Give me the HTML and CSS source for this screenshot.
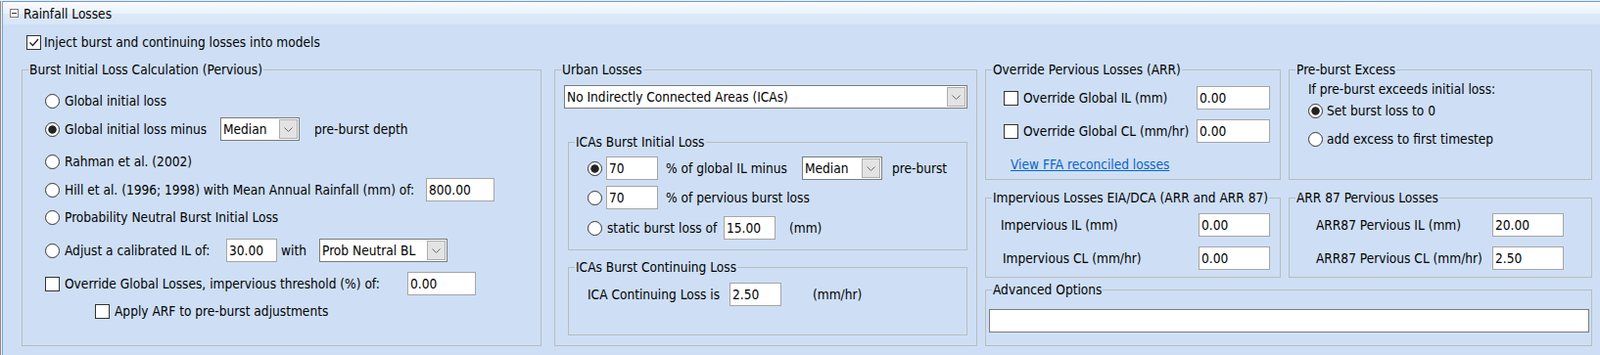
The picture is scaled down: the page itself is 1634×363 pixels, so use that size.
FILE: index.html
```html
<!DOCTYPE html>
<html lang="en">
<head>
  <meta charset="UTF-8">
  <title>Rainfall Losses</title>
  <link rel="stylesheet" href="styles.css">
</head>
<body>
  <div class="window">
    <div class="panel">
      <div class="panel-head">
        <span class="collapse"></span>
        <span>Rainfall Losses</span>
      </div>
      <div class="panel-body">
        <div class="inject">
          <span class="check is-on"><svg width="13" height="13" viewBox="0 0 13 13"><polyline points="2.5,6.5 5.5,9.5 11,3" fill="none" stroke="#222" stroke-width="1.3"/></svg></span>
          <span class="opt-text">Inject burst and continuing losses into models</span>
        </div>

        <div class="layout">
          <!-- pervious burst loss -->
          <fieldset class="group group-burst">
            <legend>Burst Initial Loss Calculation (Pervious)</legend>
            <div class="burst-opts">
              <div class="row">
                <span class="radio"></span><span class="opt-text">Global initial loss</span>
              </div>
              <div class="row">
                <span class="radio is-on"></span><span class="opt-text lbl-minus">Global initial loss minus</span>
                <div class="combo combo-median">
                  <span class="combo-text">Median</span>
                  <span class="combo-btn"><svg width="9" height="5" viewBox="0 0 9 5"><polyline points="0.5,0.5 4.5,4.5 8.5,0.5" fill="none" stroke="#6a6a6a"/></svg></span>
                </div>
                <span class="after-median">pre-burst depth</span>
              </div>
              <div class="row">
                <span class="radio"></span><span class="opt-text">Rahman et al. (2002)</span>
              </div>
              <div class="row">
                <span class="radio"></span><span class="opt-text lbl-hill">Hill et al. (1996; 1998) with Mean Annual Rainfall (mm) of:</span>
                <input class="field field-70" type="text" value="800.00">
              </div>
              <div class="row">
                <span class="radio"></span><span class="opt-text">Probability Neutral Burst Initial Loss</span>
              </div>
              <div class="row">
                <span class="radio"></span><span class="opt-text lbl-adjust">Adjust a calibrated IL of:</span>
                <input class="field field-adjust" type="text" value="30.00">
                <span class="lbl-with">with</span>
                <div class="combo combo-prob">
                  <span class="combo-text">Prob Neutral BL</span>
                  <span class="combo-btn"><svg width="9" height="5" viewBox="0 0 9 5"><polyline points="0.5,0.5 4.5,4.5 8.5,0.5" fill="none" stroke="#6a6a6a"/></svg></span>
                </div>
              </div>
              <div class="row">
                <span class="check"></span><span class="opt-text lbl-threshold">Override Global Losses, impervious threshold (%) of:</span>
                <input class="field field-70" type="text" value="0.00">
              </div>
              <div class="row row-arf">
                <span class="check"></span><span class="opt-text">Apply ARF to pre-burst adjustments</span>
              </div>
            </div>
          </fieldset>

          <!-- urban -->
          <fieldset class="group group-urban">
            <legend>Urban Losses</legend>
            <div class="urban-body">
              <div class="combo combo-ica">
                <span class="combo-text">No Indirectly Connected Areas (ICAs)</span>
                <span class="combo-btn"><svg width="9" height="5" viewBox="0 0 9 5"><polyline points="0.5,0.5 4.5,4.5 8.5,0.5" fill="none" stroke="#6a6a6a"/></svg></span>
              </div>

              <fieldset class="group group-ica-il">
                <legend>ICAs Burst Initial Loss</legend>
                <div class="ica-opts">
                  <div class="row">
                    <span class="radio is-on"></span>
                    <input class="field field-pct" type="text" value="70">
                    <span class="lbl-pct lbl-global">% of global IL minus</span>
                    <div class="combo combo-ica-median">
                      <span class="combo-text">Median</span>
                      <span class="combo-btn"><svg width="9" height="5" viewBox="0 0 9 5"><polyline points="0.5,0.5 4.5,4.5 8.5,0.5" fill="none" stroke="#6a6a6a"/></svg></span>
                    </div>
                    <span class="after-ica-median">pre-burst</span>
                  </div>
                  <div class="row">
                    <span class="radio"></span>
                    <input class="field field-pct" type="text" value="70">
                    <span class="lbl-pct">% of pervious burst loss</span>
                  </div>
                  <div class="row">
                    <span class="radio"></span>
                    <span class="opt-text lbl-static">static burst loss of</span>
                    <input class="field field-53" type="text" value="15.00">
                    <span class="unit-mm">(mm)</span>
                  </div>
                </div>
              </fieldset>

              <fieldset class="group group-ica-cl">
                <legend>ICAs Burst Continuing Loss</legend>
                <div class="ica-cl-body">
                  <div class="row">
                    <span class="lbl-ica-cl">ICA Continuing Loss is</span>
                    <input class="field field-53" type="text" value="2.50">
                    <span class="unit-mmhr">(mm/hr)</span>
                  </div>
                </div>
              </fieldset>
            </div>
          </fieldset>

          <!-- right hand side -->
          <div class="col-right">
            <div class="right-top">
              <fieldset class="group group-override">
                <legend>Override Pervious Losses (ARR)</legend>
                <div class="override-body">
                  <div class="row">
                    <span class="check"></span><span class="opt-text lbl-override">Override Global IL (mm)</span>
                    <input class="field field-override" type="text" value="0.00">
                  </div>
                  <div class="row row-next">
                    <span class="check"></span><span class="opt-text lbl-override">Override Global CL (mm/hr)</span>
                    <input class="field field-override" type="text" value="0.00">
                  </div>
                  <a class="ffa-link" href="#">View FFA reconciled losses</a>
                </div>
              </fieldset>

              <fieldset class="group group-excess">
                <legend>Pre-burst Excess</legend>
                <div class="excess-body">
                  <div class="excess-note">If pre-burst exceeds initial loss:</div>
                  <div class="row row-set">
                    <span class="radio is-on"></span><span class="opt-text">Set burst loss to 0</span>
                  </div>
                  <div class="row row-add">
                    <span class="radio"></span><span class="opt-text">add excess to first timestep</span>
                  </div>
                </div>
              </fieldset>
            </div>

            <div class="right-mid">
              <fieldset class="group group-imperv">
                <legend>Impervious Losses EIA/DCA (ARR and ARR 87)</legend>
                <div class="imperv-body">
                  <div class="row">
                    <span class="lbl-imperv">Impervious IL (mm)</span>
                    <input class="field field-73" type="text" value="0.00">
                  </div>
                  <div class="row row-next">
                    <span class="lbl-imperv lbl-imperv-cl">Impervious CL (mm/hr)</span>
                    <input class="field field-73" type="text" value="0.00">
                  </div>
                </div>
              </fieldset>

              <fieldset class="group group-arr87">
                <legend>ARR 87 Pervious Losses</legend>
                <div class="arr87-body">
                  <div class="row">
                    <span class="lbl-arr87">ARR87 Pervious IL (mm)</span>
                    <input class="field field-73" type="text" value="20.00">
                  </div>
                  <div class="row row-next">
                    <span class="lbl-arr87">ARR87 Pervious CL (mm/hr)</span>
                    <input class="field field-73" type="text" value="2.50">
                  </div>
                </div>
              </fieldset>
            </div>

            <fieldset class="group group-advanced">
              <legend>Advanced Options</legend>
              <div class="advanced-body">
                <input class="field field-advanced" type="text" value="">
              </div>
            </fieldset>
          </div>
        </div>
      </div>
    </div>
  </div>
</body>
</html>
```
FILE: styles.css
```css
body {
  margin: 0;
  font-family: "DejaVu Sans Condensed", "DejaVu Sans", sans-serif;
  font-size: 13.6px;
  line-height: 16px;
  color: #000;
  background: #f0f0f0;
}
.window {
  height: 363px;
  border-left: 1px solid #8c8c8c;
  padding-left: 1px;
  background: #f0f0f0;
}
.panel {
  margin-top: 1px;
  height: 362px;
  box-sizing: border-box;
  border-top: 1px solid #6b98d8;
  border-left: 1px solid #7aa2dc;
  background: #cedff5;
}
.panel-head {
  height: 23px;
  display: flex;
  align-items: center;
  padding-left: 7px;
  background: linear-gradient(#f9fbfe 0, #e9f1fb 12px, #dde9f8 12px, #d8e6f7 100%);
}
.collapse {
  width: 7px;
  height: 7px;
  border: 1px solid #7d7d7d;
  margin-right: 5px;
  position: relative;
  background: #fff;
}
.collapse::after {
  content: "";
  position: absolute;
  left: 1px;
  right: 1px;
  top: 3px;
  height: 1px;
  background: #333;
}
.panel-body {
  padding: 10px 8px 0 19px;
}
.inject {
  display: flex;
  align-items: center;
  height: 16px;
  margin-left: 5px;
}
.inject .opt-text {
  margin-left: 3px;
}

/* controls */
.radio, .check {
  width: 15px;
  height: 15px;
  box-sizing: border-box;
  border: 1px solid #333;
  background: #fff;
  flex: none;
}
.radio {
  border-radius: 50%;
}
.radio.is-on {
  background: radial-gradient(circle, #222 0, #222 3.8px, #fff 4.6px);
}
.check svg {
  display: block;
}
.opt-text {
  margin-left: 5px;
  white-space: nowrap;
}
.field {
  box-sizing: border-box;
  height: 24px;
  border: 1px solid #a5a5a5;
  background: #fff;
  font: inherit;
  color: #000;
  padding: 0 2px;
  margin: 0;
  outline: none;
}
.combo {
  display: flex;
  align-items: center;
  height: 24px;
  box-sizing: border-box;
  border: 1px solid #7a7a7a;
  background: #fff;
  padding: 0 1px 0 2px;
  white-space: nowrap;
}
.combo-text {
  flex: 1;
  overflow: hidden;
}
.combo-btn {
  width: 19px;
  height: 20px;
  box-sizing: border-box;
  border: 1px solid #adadad;
  background: #e3e3e3;
  display: flex;
  align-items: center;
  justify-content: center;
}
.row {
  display: flex;
  align-items: center;
  height: 24px;
  white-space: nowrap;
}

/* group boxes */
.group {
  margin: 0;
  padding: 0;
  min-width: 0;
  box-sizing: border-box;
  border: 1px solid #b9bbbe;
}
.group legend {
  margin-left: 6px;
  padding: 0 1px;
  line-height: 15px;
}
.layout {
  display: flex;
  margin-top: 13px;
}

/* burst initial loss */
.group-burst {
  width: 531px;
  height: 290px;
}
.burst-opts {
  display: grid;
  grid-template-rows: 29px 33px 29px 28px 34px 34px 28px 24px;
  align-items: start;
  padding: 12px 0 0 23px;
}
.lbl-minus { width: 159px; }
.combo-median { width: 81px; }
.after-median { margin-left: 15px; }
.lbl-hill { width: 369px; }
.field-70 { width: 70px; }
.lbl-adjust { width: 165px; }
.field-adjust { width: 52px; }
.lbl-with { width: 39px; margin-left: 4px; }
.combo-prob { width: 131px; }
.lbl-threshold { width: 350px; }
.row-arf { padding-left: 51px; }

/* urban */
.group-urban {
  width: 432px;
  height: 290px;
  margin-left: 13px;
}
.urban-body {
  padding: 8px 9px 0 9px;
}
.combo-ica { width: 412px; }
.group-ica-il {
  width: 408px;
  height: 118px;
  margin: 27px 0 0 4px;
}
.ica-opts {
  display: grid;
  grid-template-rows: 30px 31px 24px;
  align-items: start;
  padding: 7px 0 0 19px;
}
.field-pct {
  width: 53px;
  margin-left: 4px;
}
.field-53 { width: 53px; }
.lbl-pct { margin-left: 8px; }
.lbl-global { width: 139px; }
.combo-ica-median { width: 82px; }
.after-ica-median { margin-left: 10px; }
.lbl-static { width: 119px; }
.unit-mm { margin-left: 14px; }
.group-ica-cl {
  width: 408px;
  height: 77px;
  margin: 10px 0 0 4px;
}
.ica-cl-body {
  padding: 8px 0 0 19px;
}
.lbl-ica-cl { width: 145px; }
.unit-mmhr { margin-left: 32px; }

/* right column */
.col-right {
  width: 620px;
  margin-left: 8px;
}
.right-top, .right-mid {
  display: flex;
  gap: 8px;
}
.group-override, .group-imperv { width: 302px; }
.group-excess, .group-arr87 { width: 310px; }
.right-top .group { height: 120px; }
.right-mid { margin-top: 11px; }
.right-mid .group { height: 89px; }
.override-body {
  padding: 9px 0 0 18px;
}
.lbl-override { width: 177px; }
.field-override { width: 75px; }
.row-next { margin-top: 10px; }
.ffa-link {
  display: block;
  margin: 14px 0 0 7px;
  color: #0a64c8;
  text-decoration: underline;
}
.excess-body {
  padding: 4px 0 0 19px;
}
.row-set { margin-top: 2px; }
.row-set .opt-text, .row-add .opt-text { margin-left: 4px; }
.row-add { margin-top: 5px; }
.imperv-body {
  padding: 8px 0 0 15px;
}
.lbl-imperv { width: 202px; }
.lbl-imperv-cl { padding-left: 2px; width: 200px; }
.field-73 { width: 73px; }
.arr87-body {
  padding: 8px 0 0 27px;
}
.lbl-arr87 { width: 180px; }
.group-advanced {
  width: 620px;
  height: 65px;
  margin-top: 5px;
}
.advanced-body {
  padding: 12px 0 0 3px;
}
.field-advanced {
  width: 613px;
  border-color: #7a7a7a;
}
```
